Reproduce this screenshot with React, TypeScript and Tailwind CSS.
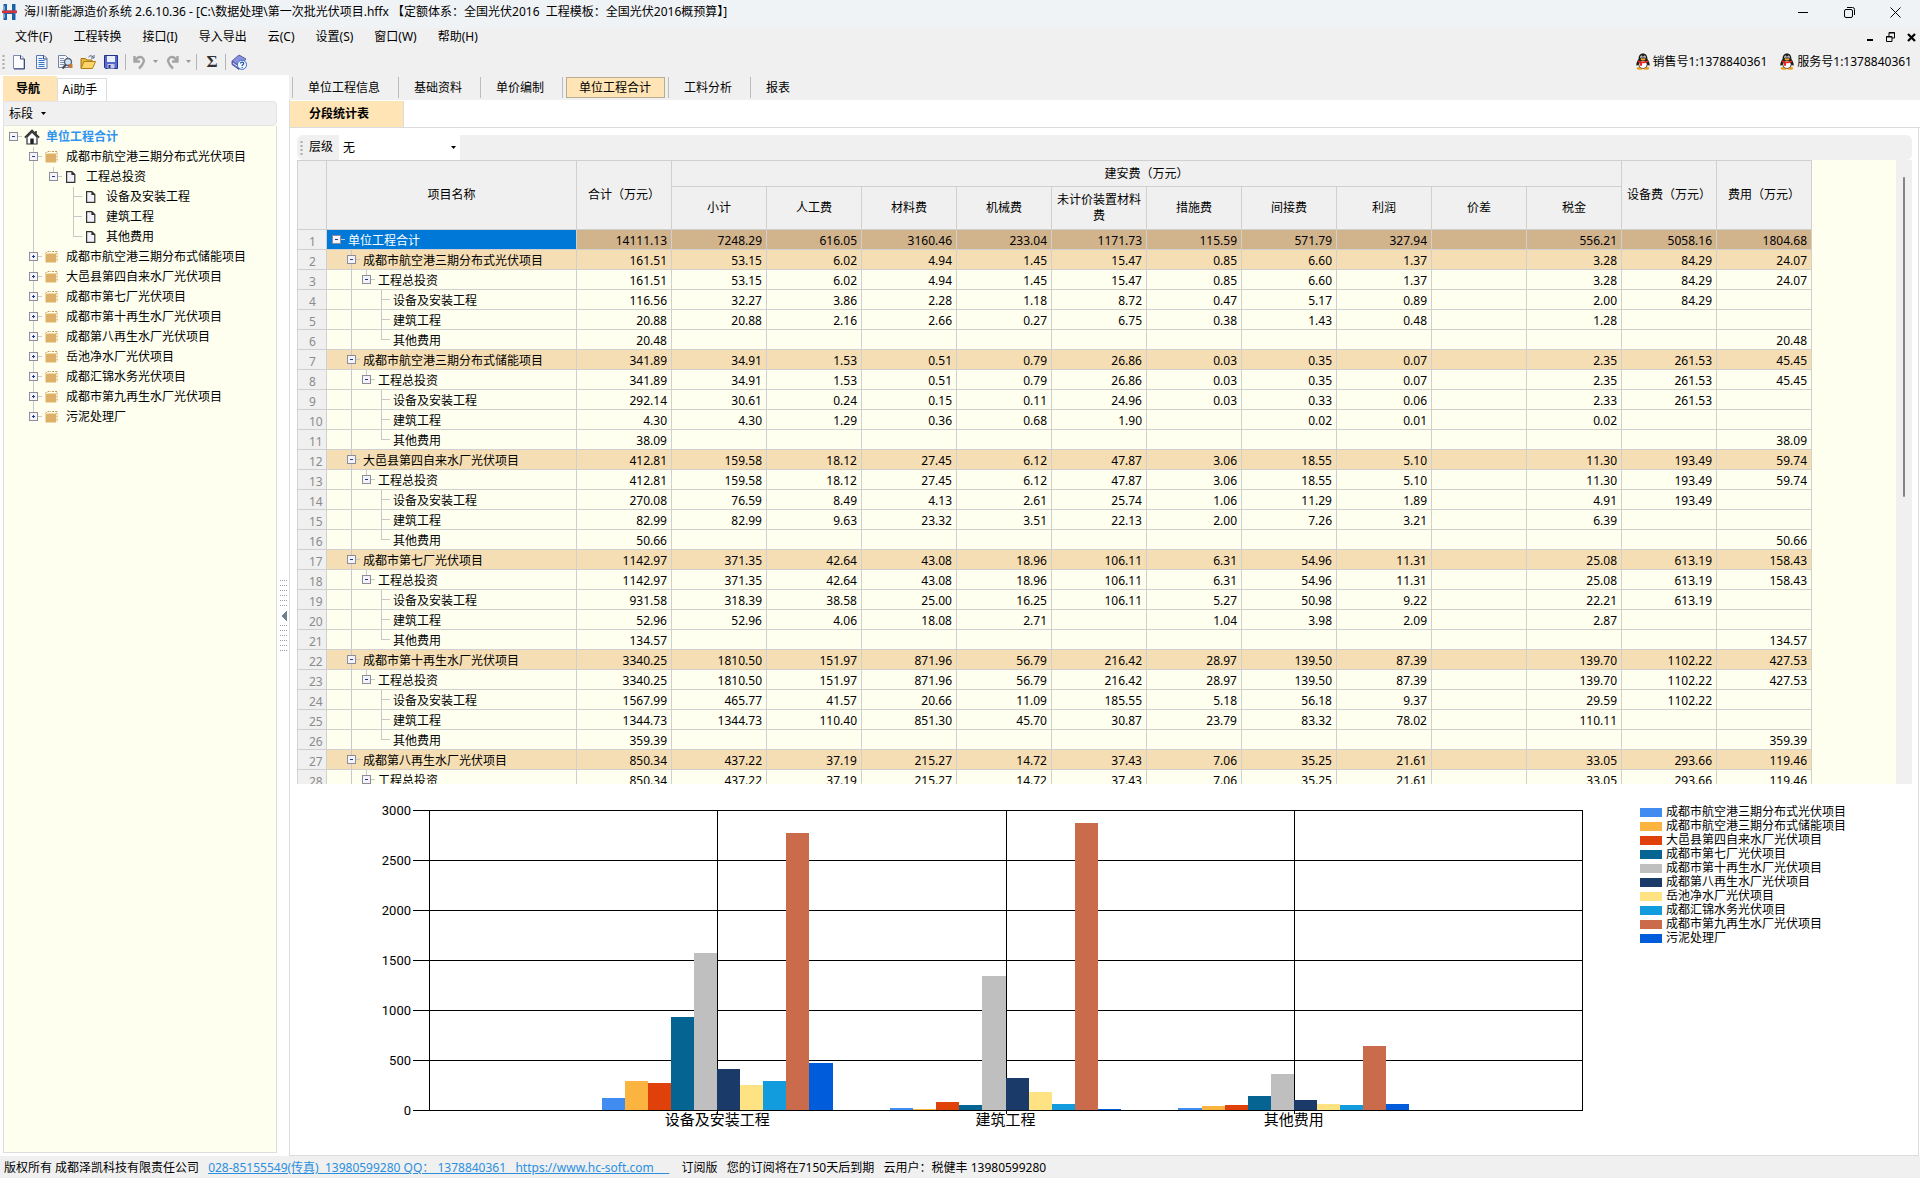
import { ReactNode } from "react";

const projects = [
  { name: "成都市航空港三期分布式光伏项目", color: "#418cf0" },
  { name: "成都市航空港三期分布式储能项目", color: "#fcb441" },
  { name: "大邑县第四自来水厂光伏项目", color: "#e0400a" },
  { name: "成都市第七厂光伏项目", color: "#056492" },
  { name: "成都市第十再生水厂光伏项目", color: "#bfbfbf" },
  { name: "成都第八再生水厂光伏项目", color: "#1a3b69" },
  { name: "岳池净水厂光伏项目", color: "#ffe382" },
  { name: "成都汇锦水务光伏项目", color: "#129cdd" },
  { name: "成都市第九再生水厂光伏项目", color: "#ca6b4b" },
  { name: "污泥处理厂", color: "#005cdb" },
];

const groups = [
  {
    label: "设备及安装工程",
    values: [116.56, 292.14, 270.08, 931.58, 1567.99, 412, 253, 292, 2770, 472],
  },
  {
    label: "建筑工程",
    values: [20.88, 8, 82.99, 52.96, 1344.73, 323, 183, 63, 2870, 12],
  },
  {
    label: "其他费用",
    values: [20.48, 38.09, 50.66, 143, 359.39, 102, 62, 52, 642, 62],
  },
];

// level|name|total|subtotal|labour|material|machine|unpriced|measures|indirect|profit|diff|tax|equipment|fees
const rows = `0|单位工程合计|14111.13|7248.29|616.05|3160.46|233.04|1171.73|115.59|571.79|327.94||556.21|5058.16|1804.68
1|成都市航空港三期分布式光伏项目|161.51|53.15|6.02|4.94|1.45|15.47|0.85|6.60|1.37||3.28|84.29|24.07
2|工程总投资|161.51|53.15|6.02|4.94|1.45|15.47|0.85|6.60|1.37||3.28|84.29|24.07
3|设备及安装工程|116.56|32.27|3.86|2.28|1.18|8.72|0.47|5.17|0.89||2.00|84.29|
3|建筑工程|20.88|20.88|2.16|2.66|0.27|6.75|0.38|1.43|0.48||1.28||
3|其他费用|20.48||||||||||||20.48
1|成都市航空港三期分布式储能项目|341.89|34.91|1.53|0.51|0.79|26.86|0.03|0.35|0.07||2.35|261.53|45.45
2|工程总投资|341.89|34.91|1.53|0.51|0.79|26.86|0.03|0.35|0.07||2.35|261.53|45.45
3|设备及安装工程|292.14|30.61|0.24|0.15|0.11|24.96|0.03|0.33|0.06||2.33|261.53|
3|建筑工程|4.30|4.30|1.29|0.36|0.68|1.90||0.02|0.01||0.02||
3|其他费用|38.09||||||||||||38.09
1|大邑县第四自来水厂光伏项目|412.81|159.58|18.12|27.45|6.12|47.87|3.06|18.55|5.10||11.30|193.49|59.74
2|工程总投资|412.81|159.58|18.12|27.45|6.12|47.87|3.06|18.55|5.10||11.30|193.49|59.74
3|设备及安装工程|270.08|76.59|8.49|4.13|2.61|25.74|1.06|11.29|1.89||4.91|193.49|
3|建筑工程|82.99|82.99|9.63|23.32|3.51|22.13|2.00|7.26|3.21||6.39||
3|其他费用|50.66||||||||||||50.66
1|成都市第七厂光伏项目|1142.97|371.35|42.64|43.08|18.96|106.11|6.31|54.96|11.31||25.08|613.19|158.43
2|工程总投资|1142.97|371.35|42.64|43.08|18.96|106.11|6.31|54.96|11.31||25.08|613.19|158.43
3|设备及安装工程|931.58|318.39|38.58|25.00|16.25|106.11|5.27|50.98|9.22||22.21|613.19|
3|建筑工程|52.96|52.96|4.06|18.08|2.71||1.04|3.98|2.09||2.87||
3|其他费用|134.57||||||||||||134.57
1|成都市第十再生水厂光伏项目|3340.25|1810.50|151.97|871.96|56.79|216.42|28.97|139.50|87.39||139.70|1102.22|427.53
2|工程总投资|3340.25|1810.50|151.97|871.96|56.79|216.42|28.97|139.50|87.39||139.70|1102.22|427.53
3|设备及安装工程|1567.99|465.77|41.57|20.66|11.09|185.55|5.18|56.18|9.37||29.59|1102.22|
3|建筑工程|1344.73|1344.73|110.40|851.30|45.70|30.87|23.79|83.32|78.02||110.11||
3|其他费用|359.39||||||||||||359.39
1|成都第八再生水厂光伏项目|850.34|437.22|37.19|215.27|14.72|37.43|7.06|35.25|21.61||33.05|293.66|119.46
2|工程总投资|850.34|437.22|37.19|215.27|14.72|37.43|7.06|35.25|21.61||33.05|293.66|119.46`
  .split("\n")
  .map((line) => {
    const [level, name, ...cells] = line.split("|");
    return { level: Number(level), name, cells };
  });

const subColumns = ["小计", "人工费", "材料费", "机械费", "未计价装置材料费", "措施费", "间接费", "利润", "价差", "税金"];

type NavItem = {
  name: string;
  level: number;
  box?: "plus" | "minus";
  icon: "home" | "folder" | "doc";
  last?: boolean;
};

const navItems: NavItem[] = [
  { name: "单位工程合计", level: 0, box: "minus", icon: "home" },
  { name: projects[0].name, level: 1, box: "minus", icon: "folder" },
  { name: "工程总投资", level: 2, box: "minus", icon: "doc", last: true },
  { name: "设备及安装工程", level: 3, icon: "doc" },
  { name: "建筑工程", level: 3, icon: "doc" },
  { name: "其他费用", level: 3, icon: "doc", last: true },
  ...projects.slice(1).map((p, i) => ({
    name: p.name,
    level: 1,
    box: "plus" as const,
    icon: "folder" as const,
    last: i === projects.length - 2,
  })),
];

function Guide({ level, step, box, last, tail }: { level: number; step: number; box?: "plus" | "minus"; last?: boolean; tail: number }) {
  const x = 9 + step * level;
  return (
    <svg width={x + tail} height="20" className="shrink-0" shapeRendering="crispEdges" aria-hidden="true">
      <g stroke="#c8c8c8">
        {level > 1 && <path d={`M${9.5 + step} 0V20`} />}
        {level > 0 && <path d={`M${x + 0.5} 0V${last ? 10 : 20}`} />}
        <path d={`M${x} 9.5H${x + 9}`} />
      </g>
      {box && (
        <g>
          <rect x={x - 3.5} y="5.5" width="8" height="8" fill="#f4f4f8" stroke="#8c8c9c" />
          <path d={`M${x - 1} 9.5H${x + 2}`} stroke="#223c8c" />
          {box === "plus" && <path d={`M${x + 0.5} 8V11`} stroke="#223c8c" />}
        </g>
      )}
    </svg>
  );
}

function NavIcon({ icon }: { icon: NavItem["icon"] }) {
  if (icon === "home") {
    return (
      <svg width="16" height="16" viewBox="0 0 16 16" aria-hidden="true">
        <path d="M3 8v7h10V8L8 3z" fill="#fff" stroke="#333" strokeWidth="1.2" />
        <path d="M.8 8.6 8 1.4l7.2 7.2M12 2v3" fill="none" stroke="#333" strokeWidth="1.6" />
        <path d="M6.3 9.5h3.4V15H6.3z" fill="#222" />
      </svg>
    );
  }
  if (icon === "folder") {
    return (
      <svg width="14" height="14" viewBox="0 0 14 14" aria-hidden="true">
        <path d="M1.5 4H12v8.500H1.500z" fill="#deb068" />
        <path d="M1 3.500 4 1.500h3M8 1.500h5V12" fill="none" stroke="#c89850" strokeDasharray="2 1" />
        <path d="M3 3h9v1H3z" fill="#f0d8a8" />
      </svg>
    );
  }
  return (
    <svg width="14" height="14" viewBox="0 0 14 14" aria-hidden="true">
      <path d="M2.6 1.6h5.2l3 3v7.8H2.6z" fill="#f2f2fa" stroke="#333" strokeWidth="1.2" />
      <path d="M7.4 1v4h4z" fill="#333" />
    </svg>
  );
}

function Caret({ className = "fill-black" }: { className?: string }) {
  return (
    <svg width="5" height="3" viewBox="0 0 5 3" className={className} aria-hidden="true">
      <path d="M0 0h5L2.5 3z" />
    </svg>
  );
}

function ToolButton({ label, children }: { label: string; children: ReactNode }) {
  return (
    <button type="button" aria-label={label} className="flex h-5 w-[23px] shrink-0 items-center justify-center">
      <svg width="16" height="16" viewBox="0 0 16 16" fill="none">
        {children}
      </svg>
    </button>
  );
}

function ToolSeparator() {
  return <span className="mx-px h-4 w-px shrink-0 bg-[#b4b4b4]" />;
}

function Grip() {
  return (
    <svg width="3" height="16" aria-hidden="true" className="shrink-0">
      <path d="M1.5 1v15" stroke="#aaa" strokeWidth="2" strokeDasharray="2 2" />
    </svg>
  );
}

function Penguin() {
  return (
    <svg width="16" height="17" viewBox="0 0 16 17" aria-hidden="true">
      <ellipse cx="4.8" cy="15.3" rx="3" ry="1.5" fill="#f0a020" />
      <ellipse cx="11.2" cy="15.3" rx="3" ry="1.5" fill="#f0a020" />
      <path d="M8 .5C4.8.5 3.5 3 3.600 6 2 8.500.8 11 1.500 12.500c.4.6 1.200-.4 1.700-1C3.800 14 5.500 15.500 8 15.500s4.200-1.500 4.800-4c.5.6 1.300 1.600 1.700 1 .7-1.500-.5-4-2.100-6.500C12.500 3 11.200.5 8 .5z" fill="#1c1c1c" />
      <ellipse cx="8" cy="11.5" rx="3.7" ry="3.5" fill="#fff" />
      <ellipse cx="6.5" cy="4" rx="1.2" ry="1.6" fill="#fff" />
      <ellipse cx="9.5" cy="4" rx="1.2" ry="1.6" fill="#fff" />
      <circle cx="6.8" cy="4.2" r=".6" fill="#000" />
      <circle cx="9.2" cy="4.2" r=".6" fill="#000" />
      <ellipse cx="8" cy="6.5" rx="2.5" ry=".9" fill="#f8a818" />
      <path d="M3.3 7.500c3 1.400 6.400 1.400 9.400 0l.5 1.600c-2.200 1-4.500 1.300-6.200 1.200v2.500H5v-3c-.9-.2-1.600-.4-2.200-.8z" fill="#e8281c" />
    </svg>
  );
}

function TitleBar() {
  return (
    <div className="flex h-7 shrink-0 items-center bg-[#f0f3f6] pb-1 pl-0.5">
      <svg width="15" height="18" viewBox="0 0 15 18" aria-hidden="true">
        <path d="M1.500 1h3.500v6.500h5V1h3.500v16H10v-6H5v6H1.500z" fill="#1c62a8" />
        <path d="M0 7.500h15v2.600H0z" fill="#d8323c" />
        <path d="M2.500 3v4M2.500 11v4" stroke="#6cacdc" />
      </svg>
      <h1 className="ml-[7px] flex-1 truncate whitespace-pre">
        {"海川新能源造价系统 2.6.10.36 - [C:\\数据处理\\第一次批光伏项目.hffx 【定额体系：全国光伏2016  工程模板：全国光伏2016概预算】]"}
      </h1>
      <button type="button" aria-label="最小化" className="flex h-5 w-[46px] items-center justify-center">
        <svg width="10" height="10" stroke="#000"><path d="M0 5.500h10" /></svg>
      </button>
      <button type="button" aria-label="还原" className="flex h-5 w-[46px] items-center justify-center">
        <svg width="11" height="11" fill="none" stroke="#000">
          <rect x=".5" y="2.5" width="8" height="8" rx="1.5" />
          <path d="M3 .5h5.500a2 2 0 0 1 2 2V8" />
        </svg>
      </button>
      <button type="button" aria-label="关闭" className="flex h-5 w-[46px] items-center justify-center">
        <svg width="11" height="11" stroke="#000"><path d="m.5.5 10 10m0-10-10 10" /></svg>
      </button>
      <span className="w-0.5" />
    </div>
  );
}

function MenuBar() {
  return (
    <div className="flex h-[18px] shrink-0 items-center justify-between bg-[#f0f0f0] pr-1 pl-[15px]">
      <nav className="flex gap-[21px]">
        {["文件(F)", "工程转换", "接口(I)", "导入导出", "云(C)", "设置(S)", "窗口(W)", "帮助(H)"].map((m) => (
          <button key={m} type="button" className="whitespace-nowrap">{m}</button>
        ))}
      </nav>
      <div className="flex items-center gap-3">
        <button type="button" aria-label="最小化窗口">
          <svg width="8" height="10"><path d="M1 8h6" stroke="#000" strokeWidth="2" /></svg>
        </button>
        <button type="button" aria-label="还原窗口">
          <svg width="9" height="10" fill="none" stroke="#000">
            <path d="M3 4V.5h5.500V6H6M3 1h6" />
            <path d="M.5 4.500H6v5H.5zM0 5h6" />
          </svg>
        </button>
        <button type="button" aria-label="关闭窗口">
          <svg width="9" height="9" stroke="#000" strokeWidth="2.2"><path d="m1 1 7 7m0-7L1 8" /></svg>
        </button>
      </div>
    </div>
  );
}

function Toolbar() {
  return (
    <div className="flex h-[29px] shrink-0 items-center bg-[#f0f0f0] pt-0.5 pr-2 pl-0.5">
      <Grip />
      <span className="w-0.5" />
      <ToolButton label="新建">
        <path d="M2.500 1.500h7.500l3 3v10H2.500z" fill="#fdfdff" stroke="#7c8cb0" />
        <path d="M9.500 1.500v3.500H13M13.500 5v10H3" stroke="#3c4c7c" />
      </ToolButton>
      <ToolButton label="新建文档">
        <path d="M2.500 1.500h7.500l3 3v10H2.500z" fill="#f0f6ff" stroke="#5c74ac" />
        <path d="M9.500 1.500v3.500H13" stroke="#3c4c7c" />
        <path d="M4.500 4.500h4M4.500 6.500h6M4.500 8.500h6M4.500 10.500h6M4.500 12.500h6" stroke="#3878c8" />
      </ToolButton>
      <ToolButton label="查找">
        <path d="M1.500 1.500h7l3 3v9h-10z" fill="#f4f6fa" stroke="#7484a0" />
        <path d="M3 4.500h4M3 6.500h5M3 8.500h4M3 10.500h4" stroke="#8494b4" />
        <circle cx="11" cy="8" r="3.5" fill="#cfe4f4" stroke="#5c6474" strokeWidth="1.4" />
        <path d="m9 10.500-3.500 4" stroke="#4c5058" strokeWidth="2.2" />
        <path d="M12 10h3.500v4H12z" fill="#c87c38" />
      </ToolButton>
      <ToolButton label="打开">
        <path d="M1 14V4.500h4.500l1.500 1.500H12v2" fill="#e8b440" stroke="#a87818" />
        <path d="M1 14.500 4 7.500h11.500l-3 7z" fill="#fcd468" stroke="#b08018" />
        <path d="M8.500 3c1.500-1.800 3.500-1.600 5 .5M14 1v3h-3" stroke="#485c88" />
      </ToolButton>
      <ToolButton label="保存">
        <path d="M1.500 1.500h13v13h-12l-1-1z" fill="#5868cc" stroke="#24308c" />
        <path d="M4 2h8v6H4z" fill="#e8f0fc" />
        <path d="M4.500 10h7v4.500h-7z" fill="#c8cce4" />
        <path d="M5.500 11h2v3h-2z" fill="#24308c" />
      </ToolButton>
      <span className="w-0.5" />
      <ToolSeparator />
      <ToolButton label="撤销">
        <path d="M3.500 2v5.500H9M4 7c2-3.800 4.500-4.800 7-3.500 3 1.800 2.500 6-3 11" stroke="#a4a4a4" strokeWidth="2.4" />
      </ToolButton>
      <button type="button" aria-label="撤销列表" className="px-[3px]"><Caret className="fill-[#999]" /></button>
      <ToolButton label="重做">
        <path d="M12.500 2v5.500H7M12 7C10 3.200 7.500 2.200 5 3.500c-3 1.800-2.500 6 3 11" stroke="#a4a4a4" strokeWidth="2.4" />
      </ToolButton>
      <button type="button" aria-label="重做列表" className="px-0.5"><Caret className="fill-[#999]" /></button>
      <span className="w-0.5" />
      <ToolSeparator />
      <span className="w-0.5" />
      <button type="button" aria-label="汇总" className="flex w-6 justify-center font-serif text-[17px] leading-5 font-bold text-[#333]">Σ</button>
      <ToolSeparator />
      <ToolButton label="帮助">
        <path d="m1 7 7-6 7 4-6 7.500z" fill="#8890dc" stroke="#5860a8" />
        <path d="M1 7v3.500l7 5V12z" fill="#6870c4" stroke="#5058a0" />
        <path d="m2 9 6 4.500" stroke="#e4e8fc" />
        <circle cx="11" cy="10.8" r="4.6" fill="#f0f6ff" stroke="#3c70c8" />
        <path d="M9.500 9.600c0-2 3.200-2 3.200 0 0 1.200-1.600 1.200-1.600 2.400M11.100 13v1" stroke="#2450a8" strokeWidth="1.2" />
      </ToolButton>
      <div className="ml-auto flex gap-3">
        <a href="#sales" className="flex items-center gap-0.5 whitespace-nowrap"><Penguin />销售号1:1378840361</a>
        <a href="#service" className="flex items-center gap-0.5 whitespace-nowrap"><Penguin />服务号1:1378840361</a>
      </div>
    </div>
  );
}

function Sidebar() {
  return (
    <aside className="flex w-[274px] shrink-0 flex-col pt-px">
      <div className="flex h-[25px] shrink-0 items-end">
        <button type="button" className="h-[25px] w-[54px] bg-[#ffe4b5] pr-1 font-bold">导航</button>
        <button type="button" className="h-[23px] w-[50px] border border-b-0 border-[#dcdcdc] pr-1">Ai助手</button>
      </div>
      <div className="flex h-[25px] shrink-0 items-center rounded-r border border-[#e4e4e4] bg-[#f0f0f0] pl-[5px]">
        <button type="button" className="flex items-center gap-2">标段<Caret /></button>
      </div>
      <ul className="min-h-0 flex-1 overflow-hidden border border-t-0 border-[#dcdcdc] bg-[#fffff0] pt-px">
        {navItems.map((item) => (
          <li key={item.name} className="flex h-5 items-center whitespace-nowrap">
            <Guide level={item.level} step={20} box={item.box} last={item.last} tail={11} />
            <span className="flex w-[22px] shrink-0"><NavIcon icon={item.icon} /></span>
            <span className={item.level === 0 ? "font-bold text-[#2f94f0]" : ""}>{item.name}</span>
          </li>
        ))}
      </ul>
    </aside>
  );
}

function Splitter() {
  return (
    <div className="flex w-3 shrink-0 flex-col items-end justify-center pt-1 pr-px">
      <svg width="8" height="72" aria-hidden="true" shapeRendering="crispEdges">
        {[0, 5, 10, 15, 20, 25, 45, 50, 55, 60, 65, 70].map((y) => (
          <path key={y} d={`M0 ${y + 0.5}h8`} stroke="#999" strokeDasharray="1 1" />
        ))}
        <path d="M7 30v12L1 36z" fill="#708090" />
      </svg>
    </div>
  );
}

function ModuleTabs() {
  const tabs = ["单位工程信息", "基础资料", "单价编制", "单位工程合计", "工料分析", "报表"];
  return (
    <div className="flex h-[25px] shrink-0 items-center bg-[#f0f0f0] pl-[3px]">
      {tabs.map((tab) => (
        <div key={tab} className="flex items-center border-l border-[#bcbcbc]">
          <button
            type="button"
            className={
              tab === "单位工程合计"
                ? "mx-[3px] h-[21px] border border-[#b8ac94] bg-[#ffe4b5] pr-[13px] pl-3 whitespace-nowrap"
                : "h-[21px] pr-[18px] pl-[15px] whitespace-nowrap"
            }
          >
            {tab}
          </button>
        </div>
      ))}
    </div>
  );
}

const th = "border-r border-b border-[#d0d0d0] p-0 font-normal leading-4";

function rowColor(level: number) {
  if (level === 0) return "bg-[#d2b48c]";
  return level === 1 ? "bg-[#f5deb3]" : "bg-[#fffff0]";
}

function CostTable() {
  return (
    <table className="w-[1515px] table-fixed border-separate border-spacing-0 border-t border-l border-[#d0d0d0]">
      <colgroup>
        <col className="w-[29px]" />
        <col className="w-[250px]" />
        {Array.from({ length: 13 }, (_, i) => <col key={i} className="w-[95px]" />)}
      </colgroup>
      <thead className="bg-[#f0f0f0]">
        <tr className="h-[26px]">
          <th rowSpan={2} className={th} aria-label="序号" />
          <th rowSpan={2} className={th}>项目名称</th>
          <th rowSpan={2} className={th}>合计（万元）</th>
          <th colSpan={10} className={th}>建安费（万元）</th>
          <th rowSpan={2} className={th}>设备费（万元）</th>
          <th rowSpan={2} className={th}>费用（万元）</th>
        </tr>
        <tr className="h-[43px]">
          {subColumns.map((c) => <th key={c} className={th}>{c}</th>)}
        </tr>
      </thead>
      <tbody>
        {rows.map((row, i) => (
          <tr key={i} className={`h-5 ${rowColor(row.level)}`}>
            <th scope="row" className="h-5 border-r border-b border-[#d0d0d0] bg-[#f0f0f0] p-0 pt-1 pl-[11px] text-left leading-[15px] font-normal text-[#8c8c8c]">
              {i + 1}
            </th>
            <td className={`h-5 border-r border-b border-[#d0d0d0] p-0 ${row.level === 0 ? "bg-[#0078d7] text-white" : ""}`}>
              <div className="flex h-[19px] items-center overflow-hidden whitespace-nowrap">
                <Guide
                  level={row.level}
                  step={15}
                  box={row.level < 3 ? "minus" : undefined}
                  last={row.level === 2 || row.name === "其他费用"}
                  tail={12}
                />
                <span className="pt-0.5">{row.name}</span>
              </div>
            </td>
            {row.cells.map((cell, j) => (
              <td key={j} className="h-5 border-r border-b border-[#d0d0d0] p-0 pt-0.5 pr-1 text-right leading-[17px]">{cell}</td>
            ))}
          </tr>
        ))}
      </tbody>
    </table>
  );
}

function CostChart() {
  const left = 139;
  const bottom = 326;
  const pitch = 288.25;
  const bar = pitch * 0.08;
  return (
    <div className="flex shrink-0 items-start">
      <svg viewBox="0 0 1350 371" className="min-w-0 flex-1" role="img" aria-label="分段统计图">
        <g stroke="#000" shapeRendering="crispEdges">
          {[0, 1, 2, 3, 4, 5, 6].map((n) => (
            <path key={n} d={`M${left - 16} ${bottom - n * 50 + 0.5}H${left + pitch * 4}`} />
          ))}
          {[0, 1, 2, 3, 4].map((n) => (
            <path key={n} d={`M${Math.round(left + n * pitch) + 0.5} ${bottom - 300}V${bottom + (n % 4 ? 4 : 1)}`} />
          ))}
        </g>
        {[0, 1, 2, 3, 4, 5, 6].map((n) => (
          <text key={n} x={left - 18} y={bottom - n * 50 + 5} textAnchor="end" className="font-[Roboto] text-[13px]">
            {n * 500}
          </text>
        ))}
        {groups.map((g, i) => {
          const center = left + pitch * (i + 1);
          return (
            <g key={g.label}>
              {g.values.map((v, j) => (
                <rect
                  key={j}
                  x={center + (j - 5) * bar}
                  y={bottom - v / 10}
                  width={bar}
                  height={v / 10}
                  fill={projects[j].color}
                  shapeRendering="crispEdges"
                />
              ))}
              <text x={center} y={bottom + 15} textAnchor="middle" className="text-[15px]">{g.label}</text>
            </g>
          );
        })}
      </svg>
      <ul className="w-[278px] shrink-0 pt-[21px]">
        {projects.map((p) => (
          <li key={p.name} className="flex h-3.5 items-center gap-1 whitespace-nowrap">
            <span className="h-[9px] w-[22px]" style={{ backgroundColor: p.color }} />
            {p.name}
          </li>
        ))}
      </ul>
    </div>
  );
}

function Workspace() {
  return (
    <main className="flex min-w-0 flex-1 flex-col">
      <ModuleTabs />
      <div className="flex h-7 shrink-0 border-b border-l border-[#dcdcdc] pt-px">
        <button type="button" className="w-[114px] border-r border-[#dcdcdc] bg-[#ffe4b5] pr-[15px] font-bold">分段统计表</button>
      </div>
      <div className="mr-px flex min-h-0 flex-1 flex-col border-x border-b border-[#dcdcdc] pt-[7px]">
        <div className="mr-1.5 ml-[7px] flex h-[25px] shrink-0 items-center rounded-md bg-[#f0f0f0] pl-[3px]">
          <Grip />
          <label htmlFor="level" className="mx-[6px] pb-0.5">层级</label>
          <div className="relative h-full">
            <select id="level" className="h-full w-[121px] appearance-none bg-white pl-1">
              <option>无</option>
            </select>
            <span className="pointer-events-none absolute inset-y-0 right-1 flex items-center"><Caret /></span>
          </div>
        </div>
        <div className="mr-1.5 ml-[7px] flex min-h-0 flex-1 bg-[#fffff0]">
          <div className="min-w-0 flex-1 overflow-hidden"><CostTable /></div>
          <div className="w-4 shrink-0 bg-[#f0f0f0] pt-[17px] pl-[7px]">
            <div className="h-[320px] w-0.5 rounded bg-[#858585]" />
          </div>
        </div>
        <CostChart />
      </div>
    </main>
  );
}

export default function App() {
  return (
    <div className="flex h-screen flex-col overflow-hidden bg-white font-['Noto_Sans','Noto_Sans_CJK_SC',sans-serif] text-xs text-black">
      <TitleBar />
      <MenuBar />
      <Toolbar />
      <div className="flex min-h-0 flex-1">
        <div className="flex pb-[3px] pl-[3px]">
          <Sidebar />
          <Splitter />
        </div>
        <Workspace />
      </div>
      <footer className="flex h-[22px] shrink-0 items-center bg-[#f0f0f0] pt-0.5 pl-1 whitespace-pre">
        <span>版权所有 成都泽凯科技有限责任公司</span>
        <a href="#contact" className="ml-[9px] text-[#2b8fe0] underline">
          {"028-85155549(传真)  13980599280 QQ： 1378840361   https://www.hc-soft.com     "}
        </a>
        <span className="ml-3">{"订阅版   您的订阅将在7150天后到期   云用户：税健丰 13980599280"}</span>
      </footer>
    </div>
  );
}
